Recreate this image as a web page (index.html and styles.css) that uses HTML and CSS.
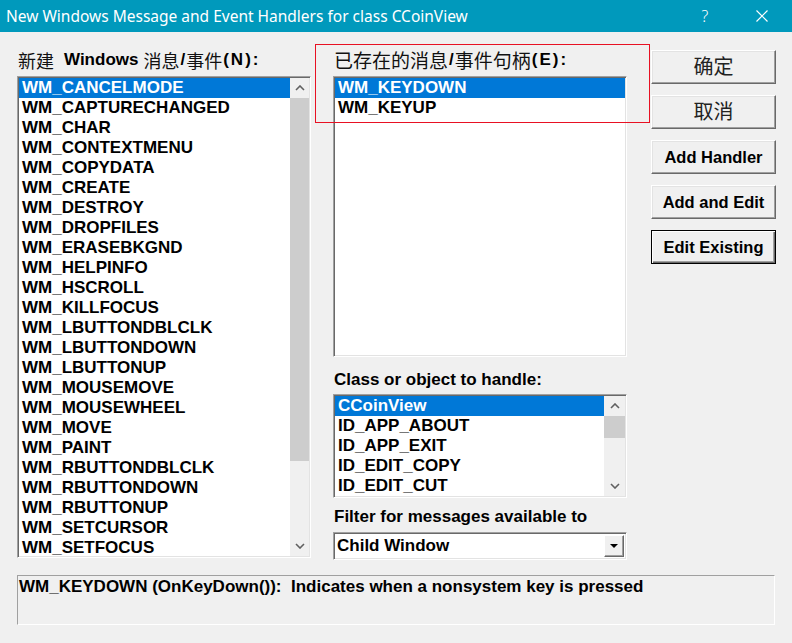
FILE: index.html
```html
<!DOCTYPE html>
<html lang="zh">
<head>
<meta charset="utf-8">
<title>New Windows Message and Event Handlers</title>
<link rel="stylesheet" href="styles.css">
</head>
<body>
<div class="window">
  <div class="titlebar">
    <span class="title">New Windows Message and Event Handlers for class CCoinView</span>
    <span class="help">?</span>
    <span class="close"><svg width="12" height="12" viewBox="0 0 12 12"><path d="M0.5 0.5 L11.5 11.5 M11.5 0.5 L0.5 11.5" stroke="#fff" stroke-width="1.2" fill="none"/></svg></span>
  </div>
  <div class="client">
    <div class="main">
      <div class="col col-left">
        <div class="label label-new"><span class="cjk">新建</span><span class="gap-wide"></span>Windows<span class="gap"></span><span class="cjk">消息</span><span class="slash">/</span><span class="cjk">事件</span><span class="key">(N):</span></div>
        <div class="listbox list-big">
          <ul class="items">
            <li class="sel">WM_CANCELMODE</li>
            <li>WM_CAPTURECHANGED</li>
            <li>WM_CHAR</li>
            <li>WM_CONTEXTMENU</li>
            <li>WM_COPYDATA</li>
            <li>WM_CREATE</li>
            <li>WM_DESTROY</li>
            <li>WM_DROPFILES</li>
            <li>WM_ERASEBKGND</li>
            <li>WM_HELPINFO</li>
            <li>WM_HSCROLL</li>
            <li>WM_KILLFOCUS</li>
            <li>WM_LBUTTONDBLCLK</li>
            <li>WM_LBUTTONDOWN</li>
            <li>WM_LBUTTONUP</li>
            <li>WM_MOUSEMOVE</li>
            <li>WM_MOUSEWHEEL</li>
            <li>WM_MOVE</li>
            <li>WM_PAINT</li>
            <li>WM_RBUTTONDBLCLK</li>
            <li>WM_RBUTTONDOWN</li>
            <li>WM_RBUTTONUP</li>
            <li>WM_SETCURSOR</li>
            <li>WM_SETFOCUS</li>
          </ul>
          <div class="vscroll vscroll-big">
            <div class="arrow"><svg width="10" height="6" viewBox="0 0 10 6"><path d="M1 5 L5 1 L9 5" stroke="#606060" stroke-width="1.6" fill="none"/></svg></div>
            <div class="thumb thumb-big"></div>
            <div class="track"></div>
            <div class="arrow"><svg width="10" height="6" viewBox="0 0 10 6"><path d="M1 1 L5 5 L9 1" stroke="#606060" stroke-width="1.6" fill="none"/></svg></div>
          </div>
        </div>
      </div>
      <div class="col col-mid">
        <div class="label label-existing"><span class="cjk">已存在的消息</span><span class="slash">/</span><span class="cjk">事件句柄</span><span class="key">(E):</span></div>
        <div class="listbox list-existing">
          <ul class="items">
            <li class="sel">WM_KEYDOWN</li>
            <li>WM_KEYUP</li>
          </ul>
        </div>
        <div class="label label-class">Class or object to handle:</div>
        <div class="listbox list-class">
          <ul class="items">
            <li class="sel">CCoinView</li>
            <li>ID_APP_ABOUT</li>
            <li>ID_APP_EXIT</li>
            <li>ID_EDIT_COPY</li>
            <li>ID_EDIT_CUT</li>
          </ul>
          <div class="vscroll vscroll-class">
            <div class="arrow"><svg width="10" height="6" viewBox="0 0 10 6"><path d="M1 5 L5 1 L9 5" stroke="#606060" stroke-width="1.6" fill="none"/></svg></div>
            <div class="thumb thumb-class"></div>
            <div class="track"></div>
            <div class="arrow"><svg width="10" height="6" viewBox="0 0 10 6"><path d="M1 1 L5 5 L9 1" stroke="#606060" stroke-width="1.6" fill="none"/></svg></div>
          </div>
        </div>
        <div class="label label-filter">Filter for messages available to</div>
        <div class="combo">
          <span class="combo-text">Child Window</span>
          <span class="combo-btn"><svg width="8" height="4" viewBox="0 0 8 4"><path d="M0 0 H8 L4 4 Z" fill="#000"/></svg></span>
        </div>
      </div>
      <div class="col col-right">
        <button class="btn btn-cjk">确定</button>
        <button class="btn btn-cjk">取消</button>
        <button class="btn">Add Handler</button>
        <button class="btn">Add and Edit</button>
        <button class="btn btn-default">Edit Existing</button>
      </div>
    </div>
    <div class="status">WM_KEYDOWN (OnKeyDown()):&nbsp; Indicates when a nonsystem key is pressed</div>
  </div>
  <div class="annot"></div>
</div>
</body>
</html>
```
FILE: styles.css
```css
* { box-sizing: border-box; }
html, body { margin: 0; padding: 0; }
body {
  width: 792px;
  height: 643px;
  background: #f0f0f0;
  overflow: hidden;
  font-family: "Liberation Sans", "Noto Sans CJK SC", sans-serif;
}
.window {
  position: relative;
  width: 792px;
  height: 643px;
  background: #f0f0f0;
}
.titlebar {
  height: 32px;
  background: #0099bc;
  color: #fff;
  display: flex;
  align-items: center;
  padding-left: 6px;
  font-family: "Noto Sans", "Open Sans", sans-serif;
  font-size: 15.5px;
}
.title { flex: 1; white-space: nowrap; }
.help {
  width: 12px;
  margin-right: 45px;
  font-size: 16px;
  font-weight: 300;
  text-align: center;
}
.close {
  width: 12px;
  height: 12px;
  margin-right: 24px;
  display: flex;
}
.client {
  padding: 12px 0 0 17px;
}
.main {
  display: flex;
  height: 516px;
}
.col { display: flex; flex-direction: column; }
.col-left { width: 294px; margin-right: 22px; }
.col-mid { width: 294px; margin-right: 24px; }
.col-right { width: 125px; padding-top: 6px; gap: 11px; }

.label {
  height: 32px;
  display: flex;
  align-items: center;
  font-size: 17px;
  font-weight: bold;
  color: #000;
  white-space: nowrap;
  padding-left: 1px;
}
.label .cjk {
  font-family: "Noto Sans CJK SC", sans-serif;
  font-weight: normal;
  font-size: 17.5px;
  color: #111;
}
.label-new .cjk { font-size: 18px; }
.label-existing .cjk { font-size: 19px; }
.label .slash { padding: 0 1px; }
.label .key { letter-spacing: 2px; padding-left: 1px; }
.gap-wide { display: inline-block; width: 10px; }
.gap { display: inline-block; width: 5px; }
.label-class { height: 37px; align-items: flex-start; padding-top: 13px; line-height: 20px; }
.label-filter { height: 34px; align-items: flex-start; padding-top: 9px; line-height: 20px; }

.listbox {
  display: flex;
  background: #fff;
  border: 1px solid;
  border-color: #a0a0a0 #fff #fff #a0a0a0;
  box-shadow: inset 1px 1px 0 #696969, inset -1px -1px 0 #e3e3e3;
  padding: 1px;
  overflow: hidden;
}
.list-big { height: 482px; }
.list-existing { height: 282px; }
.list-class { height: 104px; }

.items {
  list-style: none;
  margin: 0;
  padding: 0;
  flex: 1;
  font-size: 17px;
  font-weight: bold;
  color: #000;
}
.items li {
  height: 20px;
  line-height: 20px;
  padding-left: 3px;
  white-space: nowrap;
  overflow: hidden;
}
.items li.sel { background: #0078d7; color: #fff; }

.vscroll {
  display: flex;
  flex-direction: column;
  background: #f0f0f0;
}
.vscroll-big { width: 19px; }
.vscroll-class { width: 21px; }
.vscroll .arrow {
  height: 20px;
  display: flex;
  align-items: center;
  justify-content: center;
  flex-shrink: 0;
}
.thumb { background: #cdcdcd; flex-shrink: 0; }
.thumb-big { height: 363px; }
.thumb-class { height: 22px; }
.track { flex: 1; }

.combo {
  height: 28px;
  display: flex;
  align-items: center;
  background: #fff;
  border: 1px solid;
  border-color: #a0a0a0 #fff #fff #a0a0a0;
  box-shadow: inset 1px 1px 0 #696969, inset -1px -1px 0 #e3e3e3;
  padding: 2px 2px 2px 0;
}
.combo-text {
  flex: 1;
  font-size: 17px;
  font-weight: bold;
  padding-left: 3px;
}
.combo-btn {
  width: 20px;
  height: 22px;
  background: #f0f0f0;
  border: 1px solid;
  border-color: #fff #696969 #696969 #fff;
  box-shadow: inset -1px -1px 0 #a0a0a0;
  display: flex;
  align-items: center;
  justify-content: center;
}

.btn {
  height: 34px;
  width: 125px;
  margin: 0;
  padding: 0;
  background: #f0f0f0;
  border: 1px solid;
  border-color: #fff #696969 #696969 #fff;
  box-shadow: inset -1px -1px 0 #a0a0a0, inset 1px 1px 0 #e3e3e3;
  font-family: "Liberation Sans", sans-serif;
  font-size: 16.5px;
  font-weight: bold;
  color: #000;
  text-align: center;
}
.btn-cjk {
  font-family: "Noto Sans CJK SC", sans-serif;
  font-weight: normal;
  font-size: 20px;
  color: #222;
  padding-bottom: 3px;
  line-height: 1;
}
.btn-default {
  border: 1px solid #000;
  box-shadow: inset 1px 1px 0 #fff, inset -1px -1px 0 #696969, inset -2px -2px 0 #a0a0a0;
}

.status {
  margin-top: 15px;
  width: 758px;
  height: 50px;
  border: 1px solid;
  border-color: #a0a0a0 #fff #fff #a0a0a0;
  padding: 1px 0 0 1px;
  font-size: 17px;
  font-weight: bold;
  line-height: 20px;
  white-space: nowrap;
  color: #000;
}

.annot {
  position: absolute;
  left: 315px;
  top: 44px;
  width: 335px;
  height: 79px;
  border: 1px solid #e81123;
  pointer-events: none;
}
```
